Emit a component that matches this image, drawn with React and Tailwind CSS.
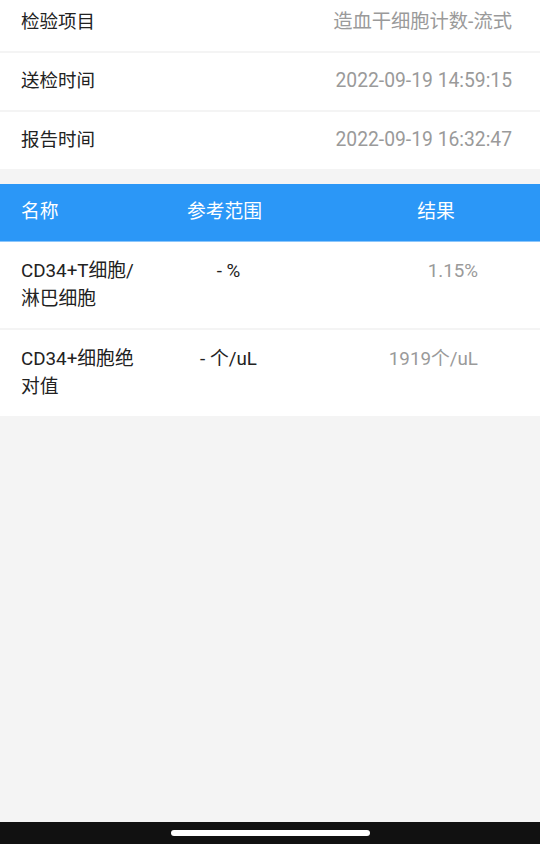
import { } from "react";

const infos = [
    { label: "检验项目", value: "造血干细胞计数-流式" },
    { label: "送检时间", value: "2022-09-19 14:59:15" },
    { label: "报告时间", value: "2022-09-19 16:32:47" },
];

const results = [
    { nom: "CD34+T细胞/淋巴细胞", ref: "- %", res: "1.15%" },
    { nom: "CD34+细胞绝对值", ref: "- 个/uL", res: "1919个/uL" },
];

export default function App() {
    return (
        <div
            className="w-[540px] h-[844px] bg-[#f4f4f4] flex flex-col overflow-hidden"
            style={{ fontFamily: "Roboto, 'Noto Sans CJK SC', sans-serif" }}
        >
            <div className="flex-1">
                {/* Infos */}
                <div className="-mt-[6px] flex flex-col gap-[2px]">
                    {infos.map((it) => (
                        <div key={it.label} className="bg-white h-[57px] flex items-center justify-between pl-[21px] pr-[28px]">
                            <span className="text-[#222] text-[18.5px]">{it.label}</span>
                            <span className="text-[#9a9a9a] text-[19.3px]">{it.value}</span>
                        </div>
                    ))}
                </div>

                {/* Tableau */}
                <div className="mt-[15px]">
                    <div className="h-[58px] bg-[#2b97f7] border-b border-[#8cc6fb] flex items-center text-white text-[18.8px] overflow-hidden">
                        <div className="w-[146px] shrink-0 pl-[21px]">名称</div>
                        <div className="w-[157px] shrink-0 text-center">参考范围</div>
                        <div className="w-[266px] shrink-0 text-center">结果</div>
                    </div>
                    <div className="flex flex-col gap-[2px]">
                        {results.map((r) => (
                            <div key={r.nom} className="bg-white flex items-start pt-[15px] pb-[15px] text-[18.8px] leading-[28px]">
                                <div className="w-[146px] shrink-0 pl-[21px] pr-[6px] text-[#222]">{r.nom}</div>
                                <div className="w-[165px] shrink-0 text-center text-[#222]">{r.ref}</div>
                                <div className="w-[167px] shrink-0 text-right text-[#9a9a9a]">{r.res}</div>
                            </div>
                        ))}
                    </div>
                </div>
            </div>

            {/* Barre de navigation */}
            <div className="h-[22px] bg-[#111] flex items-center justify-center">
                <div className="w-[199px] h-[6px] rounded-full bg-white"></div>
            </div>
        </div>
    );
}
